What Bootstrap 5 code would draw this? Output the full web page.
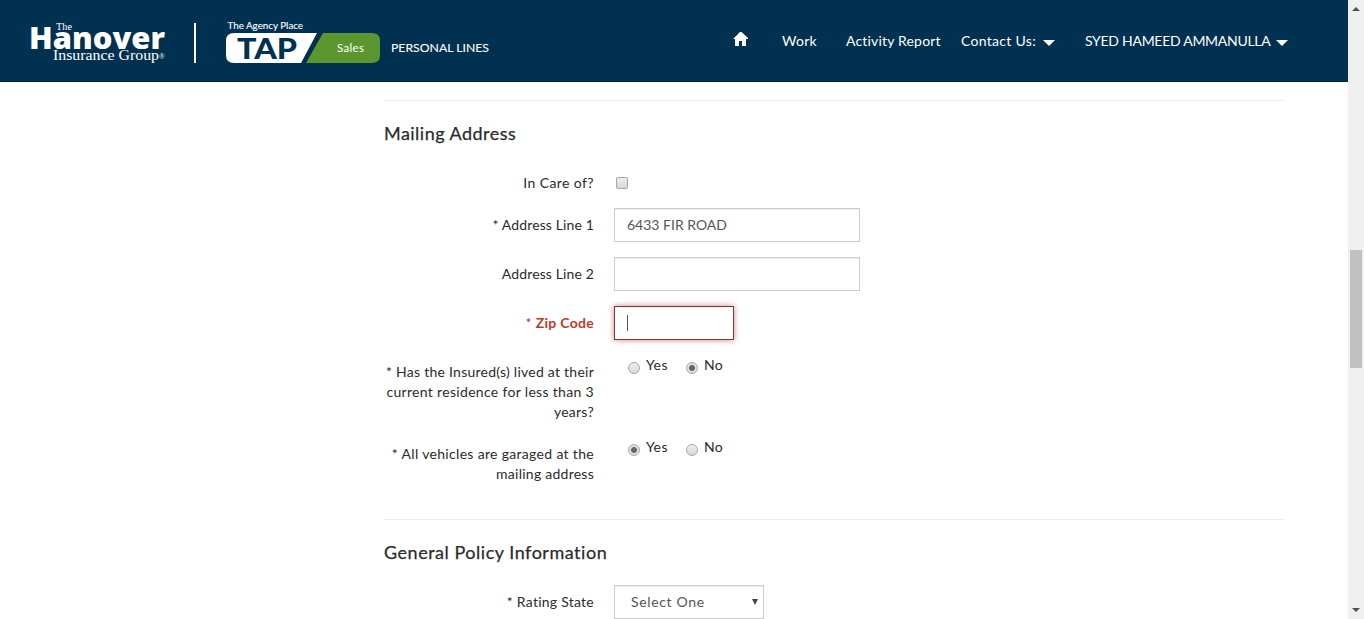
<!DOCTYPE html>
<html lang="en">
<head>
<meta charset="utf-8">
<meta name="viewport" content="width=device-width, initial-scale=1">
<title>Personal Lines - Mailing Address</title>
<link href="https://cdn.jsdelivr.net/npm/bootstrap@5.3.0/dist/css/bootstrap.min.css" rel="stylesheet">
<style>
body{font:14px/20px Lato,"Liberation Sans",sans-serif;color:#2b2b2b;height:100vh;overflow:hidden;background:#fff}
.topbar{height:82px;background:#003150;border-bottom:1px solid #00243c;color:#fff}
.brand{width:520px;height:81px;flex:none}
.topnav{padding-top:31px}
.topnav a{color:#fff;text-decoration:none;white-space:nowrap;height:20px}
.topnav svg{display:block}
.nav-home{margin-left:212px;width:50px}
.nav-work{width:64px;letter-spacing:.25px}
.nav-report{width:115px;letter-spacing:.18px}
.nav-contact{width:124px;letter-spacing:.3px}
.nav-user{letter-spacing:-.28px}
.nav-contact svg,.nav-user svg{margin-left:7px;margin-top:3px}
.nav-user svg{margin-left:6px}
.formarea{margin-left:384px;width:900px}
.section-line{height:1px;background:#eee}
.section-line.first{margin-top:18px}
.section-line.next{margin-top:35px}
.section-title{font-size:18px;line-height:22px;font-weight:400;margin:21px 0 22px;-webkit-text-stroke:.25px #2b2b2b}
.title-mailing{letter-spacing:.47px}
.title-policy{letter-spacing:.52px}
.frow{--bs-gutter-x:20px;margin-bottom:15px}
.flabel{padding-top:7px;text-align:right;white-space:nowrap;letter-spacing:.25px}
.flabel span{display:block}
.ls-tight{letter-spacing:.13px}
.ls-mid{letter-spacing:.32px}
.ls-wide{letter-spacing:.4px}
.field{height:34px;border:1px solid #ccc;border-radius:0;padding:6px 12px;font-size:14px;line-height:20px;color:#555;box-shadow:inset 0 1px 1px rgba(0,0,0,.075);background:#fff}
.field.wide{width:246px}
.field.zip{width:120px;border-color:#843534;box-shadow:inset 0 1px 1px rgba(0,0,0,.075),0 0 6px #ce8483}
.caret{width:1px;height:16px;background:#555;margin-top:2px}
.field.choose{width:150px;padding-left:16px;padding-right:5px;letter-spacing:.65px}
.tick{width:12px;height:12px;border:1px solid #a6a6a6;border-radius:2px;background:linear-gradient(#eee,#d9d9d9);margin:11px 0 0 2px}
.opt{width:58px;letter-spacing:.4px}
.dot{width:12px;height:12px;border:1px solid #a8a8a8;border-radius:50%;background:linear-gradient(#efefef,#d8d8d8);margin:7px 6px 0 0;flex:none}
.dot.on{background:radial-gradient(circle,#666 0 2.6px,#e0e0e0 3.3px)}
.optlist{margin-left:14px}
.err{color:#c0392b;letter-spacing:.3px}
.scroller{width:16px;background:#f0f0f0;flex:none}
.thumb{width:12px;height:118px;background:#c1c1c1;margin-bottom:2px}
</style>
</head>
<body class="d-flex">
<div class="flex-grow-1">
<header class="topbar d-flex">
<svg class="brand" viewBox="0 0 520 81" fill="#fff">
<g font-family="'Liberation Serif',serif">
<text x="56" y="29.500" font-size="10.500" textLength="16" lengthAdjust="spacingAndGlyphs">The</text>
<text x="53" y="60" font-size="14.500" textLength="106" lengthAdjust="spacingAndGlyphs">Insurance Group</text>
<text x="159" y="59" font-size="7.500">®</text></g>
<text x="29" y="48.500" font-family="'Open Sans',sans-serif" font-weight="800" font-size="30" textLength="136" lengthAdjust="spacingAndGlyphs">Hanover</text>
<path d="M194 23h2v40h-2z"/>
<g font-family="Lato,sans-serif" stroke="#fff" stroke-width=".1">
<text x="227.500" y="29" font-size="9.500" textLength="75.500" lengthAdjust="spacingAndGlyphs">The Agency Place</text>
<text x="391" y="52" font-size="11.500" textLength="98" lengthAdjust="spacingAndGlyphs">PERSONAL LINES</text></g>
<path d="M234 33h83l-16 30h-67q-8 0-8-8V41q0-8 8-8z"/>
<path fill="#5c962f" d="M323 33h49q8 0 8 8v14q0 8-8 8h-66z"/>
<text x="337" y="52" font-family="Lato,sans-serif" font-size="11.500" textLength="27">Sales</text>
<text x="237" y="58.500" fill="#003150" font-family="Lato,sans-serif" font-weight="900" font-size="28.500" textLength="60" lengthAdjust="spacingAndGlyphs">TAP</text>
</svg>
<nav class="topnav d-flex">
<a href="#" class="nav-home" aria-label="Home"><svg width="17" height="16" viewBox="0 0 17 16"><path fill="#fff" d="M1 8 7 2 7.500 1h2L16 7v1h-2v7h-4v-5H7v5H3V8z"/></svg></a>
<a href="#" class="nav-work">Work</a>
<a href="#" class="nav-report">Activity Report</a>
<a href="#" class="nav-contact d-flex align-items-center">Contact Us:<svg width="12" height="6"><path fill="#fff" d="M0 0h12L6 6z"/></svg></a>
<a href="#" class="nav-user d-flex align-items-center">SYED HAMEED AMMANULLA<svg width="12" height="6"><path fill="#fff" d="M0 0h12L6 6z"/></svg></a>
</nav>
</header>
<main class="formarea">
<div class="section-line first"></div>
<h2 class="section-title title-mailing">Mailing Address</h2>
<div class="row frow"><div class="col-3 flabel"><span class="ls-wide">In Care of?</span></div><div class="col-9"><div class="tick"></div></div></div>
<div class="row frow"><div class="col-3 flabel"><span class="ls-tight">* Address Line 1</span></div><div class="col-9"><div class="field wide">6433 FIR ROAD</div></div></div>
<div class="row frow"><div class="col-3 flabel"><span class="ls-tight">Address Line 2</span></div><div class="col-9"><div class="field wide"></div></div></div>
<div class="row frow"><div class="col-3 flabel err"><span>* <b>Zip Code</b></span></div><div class="col-9"><div class="field zip"><div class="caret"></div></div></div></div>
<div class="row frow"><div class="col-3 flabel"><span>* Has the Insured(s) lived at their</span><span class="ls-mid">current residence for less than 3</span><span>years?</span></div>
<div class="col-9"><div class="d-flex optlist"><div class="opt d-flex"><i class="dot"></i>Yes</div><div class="opt d-flex"><i class="dot on"></i>No</div></div></div></div>
<div class="row frow"><div class="col-3 flabel"><span class="ls-mid">* All vehicles are garaged at the</span><span>mailing address</span></div>
<div class="col-9"><div class="d-flex optlist"><div class="opt d-flex"><i class="dot on"></i>Yes</div><div class="opt d-flex"><i class="dot"></i>No</div></div></div></div>
<div class="section-line next"></div>
<h2 class="section-title title-policy">General Policy Information</h2>
<div class="row frow mb-0"><div class="col-3 flabel"><span>* Rating State</span></div><div class="col-9"><div class="field choose d-flex justify-content-between align-items-center">Select One<svg width="6" height="6"><path fill="#444" d="M0 0h6L3 6z"/></svg></div></div></div>
</main>
</div>
<aside class="scroller d-flex flex-column align-items-center justify-content-between">
<svg width="8" height="16"><path fill="#505050" d="M0 11 4 7l4 4z"/></svg>
<div class="thumb"></div>
<svg width="8" height="16"><path fill="#505050" d="M0 5h8L4 9z"/></svg>
</aside>
<script src="https://cdn.jsdelivr.net/npm/bootstrap@5.3.0/dist/js/bootstrap.bundle.min.js"></script>
</body>
</html>
